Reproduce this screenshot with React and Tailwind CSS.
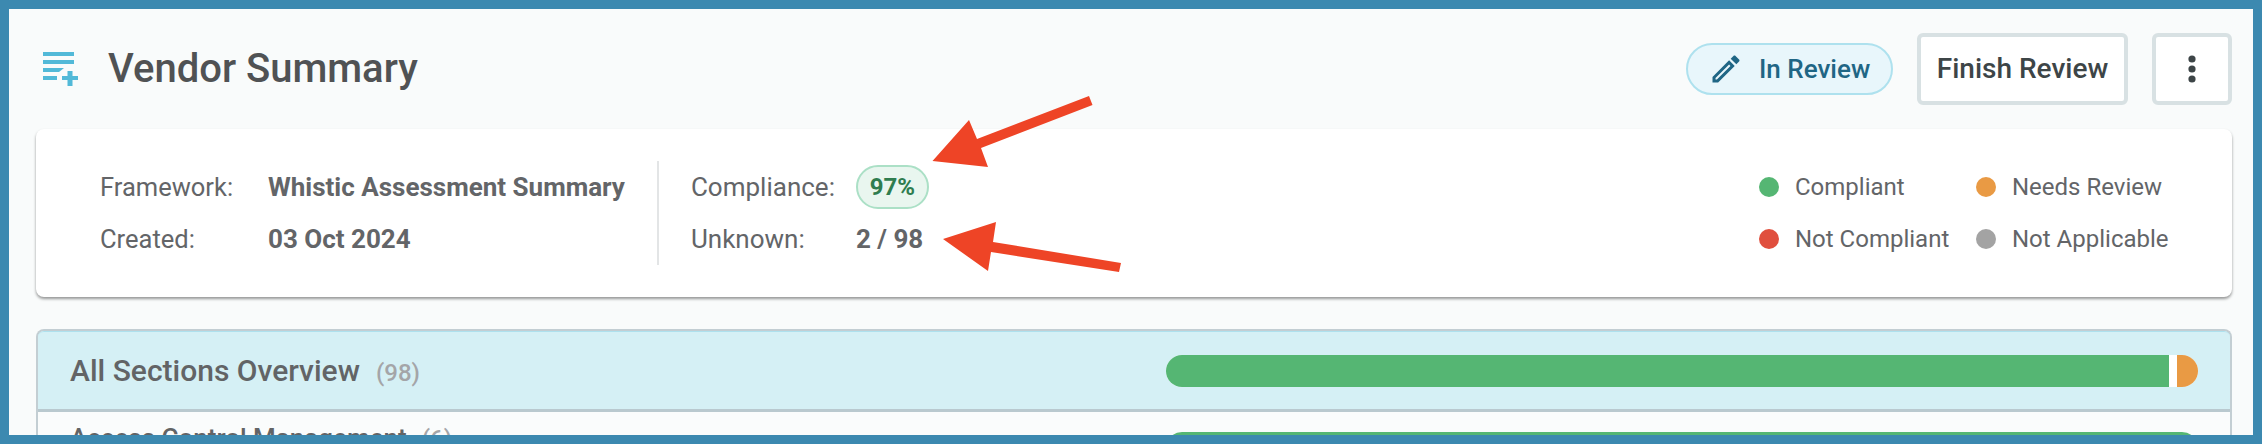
import React from "react";

function ListAddIcon() {
  return (
    <svg width="35" height="34" viewBox="0 0 35 34" className="shrink-0 text-[#52b9d8]" fill="currentColor">
      <rect x="0" y="0" width="31" height="4" />
      <rect x="0" y="8" width="31" height="4" />
      <path d="M0 16h21l-5 4H0z" />
      <rect x="0" y="24" width="14" height="4" />
      <rect x="19" y="24" width="16" height="4" />
      <rect x="24.500" y="19" width="5" height="15" />
    </svg>
  );
}

function PencilIcon() {
  return (
    <svg width="36" height="36" viewBox="0 0 24 24" fill="currentColor" className="shrink-0">
      <path d="M14.06 9.02l.92.92L5.92 19H5v-.92l9.06-9.06M17.66 3c-.25 0-.51.1-.7.29l-1.83 1.83 3.75 3.75 1.83-1.83c.39-.39.39-1.02 0-1.41l-2.34-2.34c-.2-.2-.45-.29-.71-.29zm-3.6 3.19L3 17.25V21h3.75L17.81 9.94l-3.75-3.75z" />
    </svg>
  );
}

function MoreIcon() {
  return (
    <svg width="8" height="28" viewBox="0 0 8 28" fill="currentColor">
      <circle cx="4" cy="4" r="3.600" />
      <circle cx="4" cy="14" r="3.600" />
      <circle cx="4" cy="24" r="3.600" />
    </svg>
  );
}

function LegendItem({ dot, label }) {
  return (
    <div className="flex items-center h-[52px]">
      <span className={`w-5 h-5 rounded-full shrink-0 ${dot}`} />
      <span className="ml-4 whitespace-nowrap">{label}</span>
    </div>
  );
}

export default function App() {
  return (
    <div
      className="relative w-[2262px] h-[444px] overflow-hidden bg-[#3c89b0] p-[9px]"
      style={{ fontFamily: '"Roboto", "Liberation Sans", sans-serif' }}
    >
      <div className="h-full overflow-hidden bg-[#f9fbfb] pt-6 pl-[27px] pr-[21px]">
        <header className="flex items-center h-[72px]">
          <div className="ml-[7px]">
            <ListAddIcon />
          </div>
          <h1 className="ml-[30px] text-[40px] font-medium text-[#505254]">Vendor Summary</h1>
          <div className="ml-auto flex items-center gap-6">
            <div className="flex items-center h-[52px] w-[207px] pl-5 rounded-full border-2 border-[#aee1ee] bg-[#e8f6fb] text-[#1f6685]">
              <PencilIcon />
              <span className="ml-[15px] text-[26px] font-medium">In Review</span>
            </div>
            <button className="h-[72px] w-[211px] rounded-md border-4 border-[#d8e1e3] bg-white text-[28px] font-medium text-[#3d4547]">
              Finish Review
            </button>
            <button className="flex items-center justify-center h-[72px] w-20 rounded-md border-4 border-[#d8e1e3] bg-white text-[#3d4547]">
              <MoreIcon />
            </button>
          </div>
        </header>

        <section className="flex items-center h-[168px] mt-6 pl-16 rounded-lg bg-white text-[#636568] shadow-[0_2px_3px_rgba(0,0,0,0.4)]">
          <div className="grid grid-cols-[168px_auto] auto-rows-[52px] items-center pr-8 border-r-2 border-[#e3e5e6] text-[25.500px]">
            <span>Framework:</span>
            <span className="font-bold text-[26px]">Whistic Assessment Summary</span>
            <span>Created:</span>
            <span className="font-bold text-[26px]">03 Oct 2024</span>
          </div>
          <div className="grid grid-cols-[165px_auto] auto-rows-[52px] items-center pl-[32px] text-[26px]">
            <span>Compliance:</span>
            <span className="flex items-center justify-center w-[73px] h-11 rounded-full border-2 border-[#abe0c6] bg-[#e9f6ef] font-bold text-[24px] text-[#2f7d4f]">
              97%
            </span>
            <span>Unknown:</span>
            <span className="font-bold">2 / 98</span>
          </div>
          <div className="ml-auto mr-[64px] grid grid-cols-[217px_192px] text-[24px]">
            <LegendItem dot="bg-[#55b673]" label="Compliant" />
            <LegendItem dot="bg-[#e99a44]" label="Needs Review" />
            <LegendItem dot="bg-[#e04f3e]" label="Not Compliant" />
            <LegendItem dot="bg-[#a3a3a3]" label="Not Applicable" />
          </div>
        </section>

        <section className="mt-8 rounded-t-lg border-2 border-b-0 border-[#c3ced3] bg-[#fafcfc]">
          <div className="flex items-center h-[81px] pl-8 pr-[32px] bg-[#d5f0f5] border-t border-t-[#aee1ee] border-b-[3px] border-b-[#b9c9cf] rounded-t-md">
            <div className="w-[1096px] flex items-baseline text-[30px] font-medium text-[#626466]">
              All Sections Overview
              <span className="ml-4 text-[24px] text-[#a4a5a8]">(98)</span>
            </div>
            <div className="flex flex-1 h-8 overflow-hidden rounded-full bg-white">
              <div className="w-[1003px] bg-[#55b673]" />
              <div className="w-2 bg-white" />
              <div className="flex-1 bg-[#e99a44]" />
            </div>
          </div>
          <div className="flex items-start h-[60px] pl-8 pr-[32px] pt-[10px]">
            <div className="w-[1096px] flex items-baseline text-[26px] font-medium text-[#626466] leading-8">
              Access Control Management
              <span className="ml-[15px] text-[24px] text-[#a4a5a8]">(6)</span>
            </div>
            <div className="flex-1 h-8 mt-[10px] rounded-full bg-[#55b673]" />
          </div>
        </section>
      </div>

      {/* annotation arrows drawn on top of the screenshot */}
      <svg className="absolute left-0 top-0 pointer-events-none" width="2262" height="444" fill="#ee4426">
        <polygon points="932.500,161 969,120 977,139 1089,96 1092.500,105 981,148 988,167" />
        <polygon points="943,239 996,222 993,242 1121,263 1119,272 991,252 988,271" />
      </svg>
    </div>
  );
}
